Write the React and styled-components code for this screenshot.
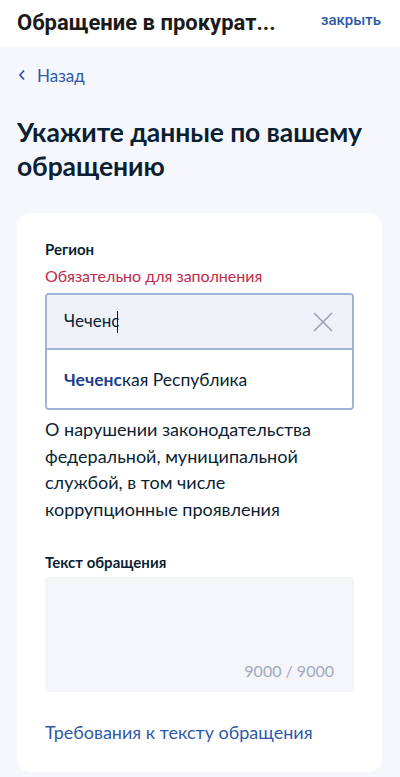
import React from "react";
import styled, { createGlobalStyle } from "styled-components";

const Global = createGlobalStyle`
  html, body {
    margin: 0;
    padding: 0;
    background: #f5f7fc;
  }
  * { box-sizing: border-box; }
`;

const Page = styled.div`
  width: 400px;
  min-height: 777px;
  background: #f5f7fc;
  font-family: Lato, "Noto Sans", sans-serif;
  color: #0b1f33;
`;

const TopBar = styled.div`
  height: 47px;
  background: #fff;
  display: flex;
  align-items: center;
  justify-content: space-between;
  padding: 0 19px 2px 17px;
`;

const TopTitle = styled.div`
  font-family: Roboto, "Liberation Sans", sans-serif;
  font-weight: 700;
  font-size: 22px;
  color: #1a1a1a;
  white-space: nowrap;
`;

const CloseLink = styled.span`
  font-family: Roboto, "Liberation Sans", sans-serif;
  font-size: 15px;
  font-weight: 500;
  color: #2e59a8;
  margin-top: -6px;
`;

const Content = styled.div`
  padding: 14px 17px 0 17px;
`;

const Back = styled.div`
  display: flex;
  align-items: center;
  gap: 11px;
  color: #2e59a8;
  font-size: 17px;
  height: 28px;
  padding-left: 1px;
`;

const Heading = styled.h1`
  margin: 26px 0 30px 0;
  font-size: 26.5px;
  line-height: 34px;
  font-weight: 700;
  letter-spacing: -0.1px;
  color: #0b1f33;
`;

const Card = styled.div`
  background: #fff;
  border-radius: 14px;
  padding: 26px 28px 28px 28px;
  width: 365px;
`;

const Label = styled.div`
  font-size: 15px;
  font-weight: 700;
  line-height: 20px;
  color: #0b1f33;
`;

const Error = styled.div`
  color: #c1294a;
  font-size: 16px;
  line-height: 20px;
  margin-top: 7px;
`;

const Combo = styled.div`
  margin-top: 7px;
  border: 2px solid #a0b4d8;
  border-radius: 4px;
  overflow: hidden;
`;

const InputRow = styled.div`
  height: 55px;
  background: #eef2f8;
  display: flex;
  align-items: center;
  justify-content: space-between;
  padding: 0 19px 0 17px;
  border-bottom: 2px solid #a0b4d8;
  font-size: 17px;
`;

const Caret = styled.span`
  display: inline-block;
  width: 1px;
  height: 22px;
  background: #0b1f33;
  vertical-align: middle;
  margin-left: -2px;
`;

const Option = styled.div`
  height: 58px;
  display: flex;
  align-items: center;
  padding: 0 17px;
  font-size: 17.5px;
  background: #fff;
  b {
    color: #1d3f8e;
    font-weight: 700;
  }
`;

const Description = styled.p`
  margin: 6px 0 0 0;
  font-size: 18px;
  line-height: 26.5px;
  color: #0b1f33;
`;

const SectionLabel = styled(Label)`
  margin-top: 30px;
`;

const TextArea = styled.div`
  margin-top: 5px;
  height: 115px;
  background: #f3f5f9;
  border-radius: 4px;
  display: flex;
  align-items: flex-end;
  justify-content: flex-end;
  padding: 0 20px 12px 0;
  color: #a0aabd;
  font-size: 16px;
`;

const Link = styled.div`
  margin-top: 28px;
  color: #2e59a8;
  font-size: 18px;
  line-height: 24px;
`;

export default function App() {
  return (
    <>
      <Global />
      <Page>
        <TopBar>
          <TopTitle>Обращение в прокурат...</TopTitle>
          <CloseLink>закрыть</CloseLink>
        </TopBar>
        <Content>
          <Back>
            <svg width="8" height="12" viewBox="0 0 8 12">
              <path d="M6 1.5 L2 6 L6 10.5" fill="none" stroke="#2e59a8" strokeWidth="1.8" />
            </svg>
            Назад
          </Back>
          <Heading>Укажите данные по вашему обращению</Heading>
          <Card>
            <Label>Регион</Label>
            <Error>Обязательно для заполнения</Error>
            <Combo>
              <InputRow>
                <span>
                  Чеченс
                  <Caret />
                </span>
                <svg width="20" height="20" viewBox="0 0 20 20">
                  <path d="M1 1 L19 19 M19 1 L1 19" stroke="#9aa3b2" strokeWidth="1.6" />
                </svg>
              </InputRow>
              <Option>
                <span>
                  <b>Чеченс</b>кая Республика
                </span>
              </Option>
            </Combo>
            <Description>
              О нарушении законодательства федеральной, муниципальной службой, в том числе коррупционные проявления
            </Description>
            <SectionLabel>Текст обращения</SectionLabel>
            <TextArea>9000 / 9000</TextArea>
            <Link>Требования к тексту обращения</Link>
          </Card>
        </Content>
      </Page>
    </>
  );
}
